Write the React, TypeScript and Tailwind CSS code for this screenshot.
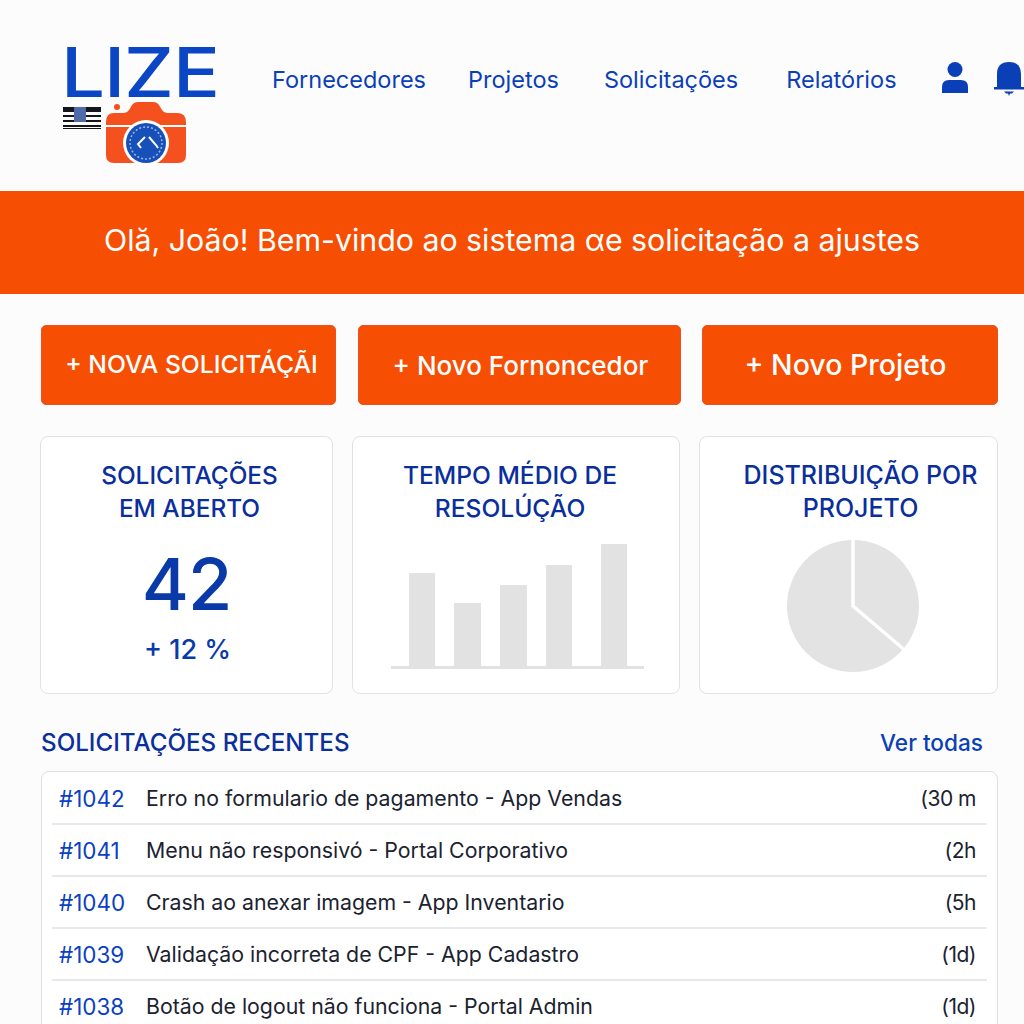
const navItems = [
  { label: "Fornecedores", margin: "ml-[56px]" },
  { label: "Projetos", margin: "ml-[42px]" },
  { label: "Solicitações", margin: "ml-[45px]" },
  { label: "Relatórios", margin: "ml-[48px]" },
];

const rows = [
  { id: "#1042", text: "Erro no formulario de pagamento - App Vendas", time: "(30 m" },
  { id: "#1041", text: "Menu não responsivó - Portal Corporativo", time: "(2h" },
  { id: "#1040", text: "Crash ao anexar imagem - App Inventario", time: "(5h" },
  { id: "#1039", text: "Validação incorreta de CPF - App Cadastro", time: "(1d)" },
  { id: "#1038", text: "Botão de logout não funciona - Portal Admin", time: "(1d)" },
];

const bars = [
  { size: "w-[26px] h-[93px]", gap: "" },
  { size: "w-[27px] h-[63px]", gap: "ml-[19px]" },
  { size: "w-[27px] h-[81px]", gap: "ml-[19px]" },
  { size: "w-[26px] h-[101px]", gap: "ml-[19px]" },
  { size: "w-[26px] h-[122px]", gap: "ml-[29px]" },
];

const Logo = () => (
  <div className="w-[160px] shrink-0">
    <div className="-ml-[4px] origin-left scale-x-[1.13] text-[69px] leading-[58px] h-[58px] font-medium text-[#0b47c4] tracking-[-1px]">
      LIZE
    </div>
    <svg width="130" height="66" viewBox="0 0 130 66" className="-mt-[1px] -ml-[2px]">
      <g fill="#14161c">
        <rect x="0" y="7" width="38" height="5" />
        <rect x="0" y="15" width="38" height="2" />
        <rect x="0" y="20" width="38" height="2" />
        <rect x="0" y="25" width="38" height="2" />
        <rect x="0" y="28" width="38" height="1" />
      </g>
      <rect x="11" y="7" width="12" height="15" fill="#4f6ba8" />
      <circle cx="54" cy="7" r="3" fill="#f4511e" />
      <path
        d="M51 13 h10 q3 0 5-3 l3-5 q2-3 6-3 h15 q4 0 6 3 l3 5 q2 3 5 3 h10 q9 0 9 9 v33 q0 8-8 8 H51 q-8 0-8-8 V22 q0-9 8-9 Z"
        fill="#f4511e"
      />
      <rect x="43" y="25" width="80" height="2" fill="#fff" />
      <circle cx="83" cy="43" r="23" fill="#fff" />
      <circle cx="83" cy="43" r="20" fill="#1650b8" />
      <circle cx="83" cy="43" r="16" fill="none" stroke="#9db6e6" strokeWidth="1.5" strokeDasharray="2 2" />
      <path d="M82 37 l-7 7 l3 4 M86 37 l7 8 l2 3" stroke="#fff" strokeWidth="2" fill="none" />
    </svg>
  </div>
);

const UserIcon = () => (
  <svg width="26" height="31" viewBox="0 0 26 31" fill="#0b3fb8" className="shrink-0">
    <circle cx="13" cy="7.5" r="7.5" />
    <path d="M0 31 v-6 q0-7 7-7 h12 q7 0 7 7 v6 Z" />
  </svg>
);

const BellIcon = () => (
  <svg width="30" height="34" viewBox="0 0 30 34" fill="#0b3fb8" className="shrink-0">
    <path d="M3 26 V12 Q3 0 15 0 Q27 0 27 12 V26 Z" />
    <rect x="0" y="25" width="30" height="2.5" />
    <path d="M10 29.5 h10 l-2 2 h-2 l-1 2.5 -1-2.5 h-2 Z" />
  </svg>
);

const ActionButton = ({ label, size }: { label: string; size: string }) => (
  <button className={`h-[80px] rounded-[5px] bg-[#f64f04] border border-[#e8531f] text-white font-medium whitespace-nowrap ${size}`}>
    {label}
  </button>
);

const Card = ({ lines, titleClass, children }: { lines: string[]; titleClass: string; children: React.ReactNode }) => (
  <div className="h-[258px] rounded-[8px] border border-[#e2e2e2] bg-white flex flex-col items-center pt-[22px]">
    <div className={`leading-[33px] font-medium text-[#0a2f9c] text-center whitespace-nowrap ${titleClass}`}>
      {lines.map((l) => (
        <div key={l}>{l}</div>
      ))}
    </div>
    {children}
  </div>
);

export default function App() {
  return (
    <div className="w-[1024px] h-[1024px] overflow-hidden bg-[#fcfcfc] font-['Inter',sans-serif]">
      <header className="h-[191px] flex items-start pl-[65px] pt-[43px] overflow-hidden">
        <Logo />
        <nav className="flex items-center h-[74px] -ml-[9px] text-[23.5px] text-[#0b3fb8] whitespace-nowrap">
          {navItems.map((n) => (
            <span key={n.label} className={n.margin}>
              {n.label}
            </span>
          ))}
          <span className="ml-[45px] flex items-start gap-[26px] -mt-[2px]">
            <UserIcon />
            <BellIcon />
          </span>
        </nav>
      </header>

      <div className="h-[103px] bg-[#f64f04] flex items-center justify-center text-white text-[30.3px] pb-[3px]">
        Olă, João! Bem-vindo ao sistema αe solicitação a ajustes
      </div>

      <main className="pl-[41px] pr-[26px] pt-[31px]">
        <div className="grid grid-cols-[295px_323px_295px] gap-[22px]">
          <ActionButton label="+ NOVA SOLICITÁÇÃI" size="text-[24.7px] pl-[6px]" />
          <ActionButton label="+ Novo Fornoncedor" size="text-[26px] pl-[2px]" />
          <ActionButton label="+ Novo Projeto" size="text-[28.5px] pr-[9px] -ml-[1px]" />
        </div>

        <div className="grid grid-cols-[293px_328px_299px] gap-[19px] mt-[31px] -ml-[1px]">
          <Card lines={["SOLICITAÇÕES", "EM ABERTO"]} titleClass="text-[24.4px] pl-[6px]">
            <div className="text-[72px] leading-[80px] font-medium text-[#0a3aa8] mt-[19px] tracking-[-1px]">42</div>
            <div className="text-[27px] leading-[36px] font-medium text-[#0a3aa8] mt-[8px] pl-[2px]">+ 12 %</div>
          </Card>
          <Card lines={["TEMPO MÉDIO DE", "RESOLÚÇÃO"]} titleClass="text-[24.6px] pr-[12px]">
            <div className="mt-[17px] ml-[3px] w-[235px] h-[124px] border-b-[3px] border-[#e2e2e2] flex items-end pl-[18px] box-content">
              {bars.map((b) => (
                <div key={b.size} className={`bg-[#e2e2e2] ${b.size} ${b.gap}`} />
              ))}
            </div>
          </Card>
          <Card lines={["DISTRIBUIÇÃO POR", "PROJETO"]} titleClass="text-[25px] pl-[24px]">
            <svg width="134" height="134" viewBox="0 0 134 134" className="mt-[14px] ml-[9px]">
              <circle cx="67" cy="67" r="66" fill="#e3e3e3" />
              <path d="M67 0 V67 L121 113" stroke="#fff" strokeWidth="3.5" fill="none" />
            </svg>
          </Card>
        </div>

        <div className="flex items-center justify-between mt-[31px] pr-[15px] h-[36px]">
          <h2 className="text-[24.2px] font-medium text-[#0a2f9c]">SOLICITAÇÕES RECENTES</h2>
          <a className="text-[22.6px] font-medium text-[#0b3fb8]">Ver todas</a>
        </div>

        <div className="mt-[10px] border border-[#e0e0e0] rounded-[8px] bg-white px-[10px] pt-[1px]">
          {rows.map((r) => (
            <div key={r.id} className="h-[52px] flex items-center border-b-2 border-[#e9e9e9] pt-[1px]">
              <span className="w-[94px] pl-[7px] text-[22.4px] text-[#0b3fc4]">{r.id}</span>
              <span className="flex-1 text-[21.3px] text-[#1b2230]">{r.text}</span>
              <span className="pr-[11px] text-[21px] tracking-[-0.5px] text-[#1b2230]">{r.time}</span>
            </div>
          ))}
        </div>
      </main>
    </div>
  );
}
